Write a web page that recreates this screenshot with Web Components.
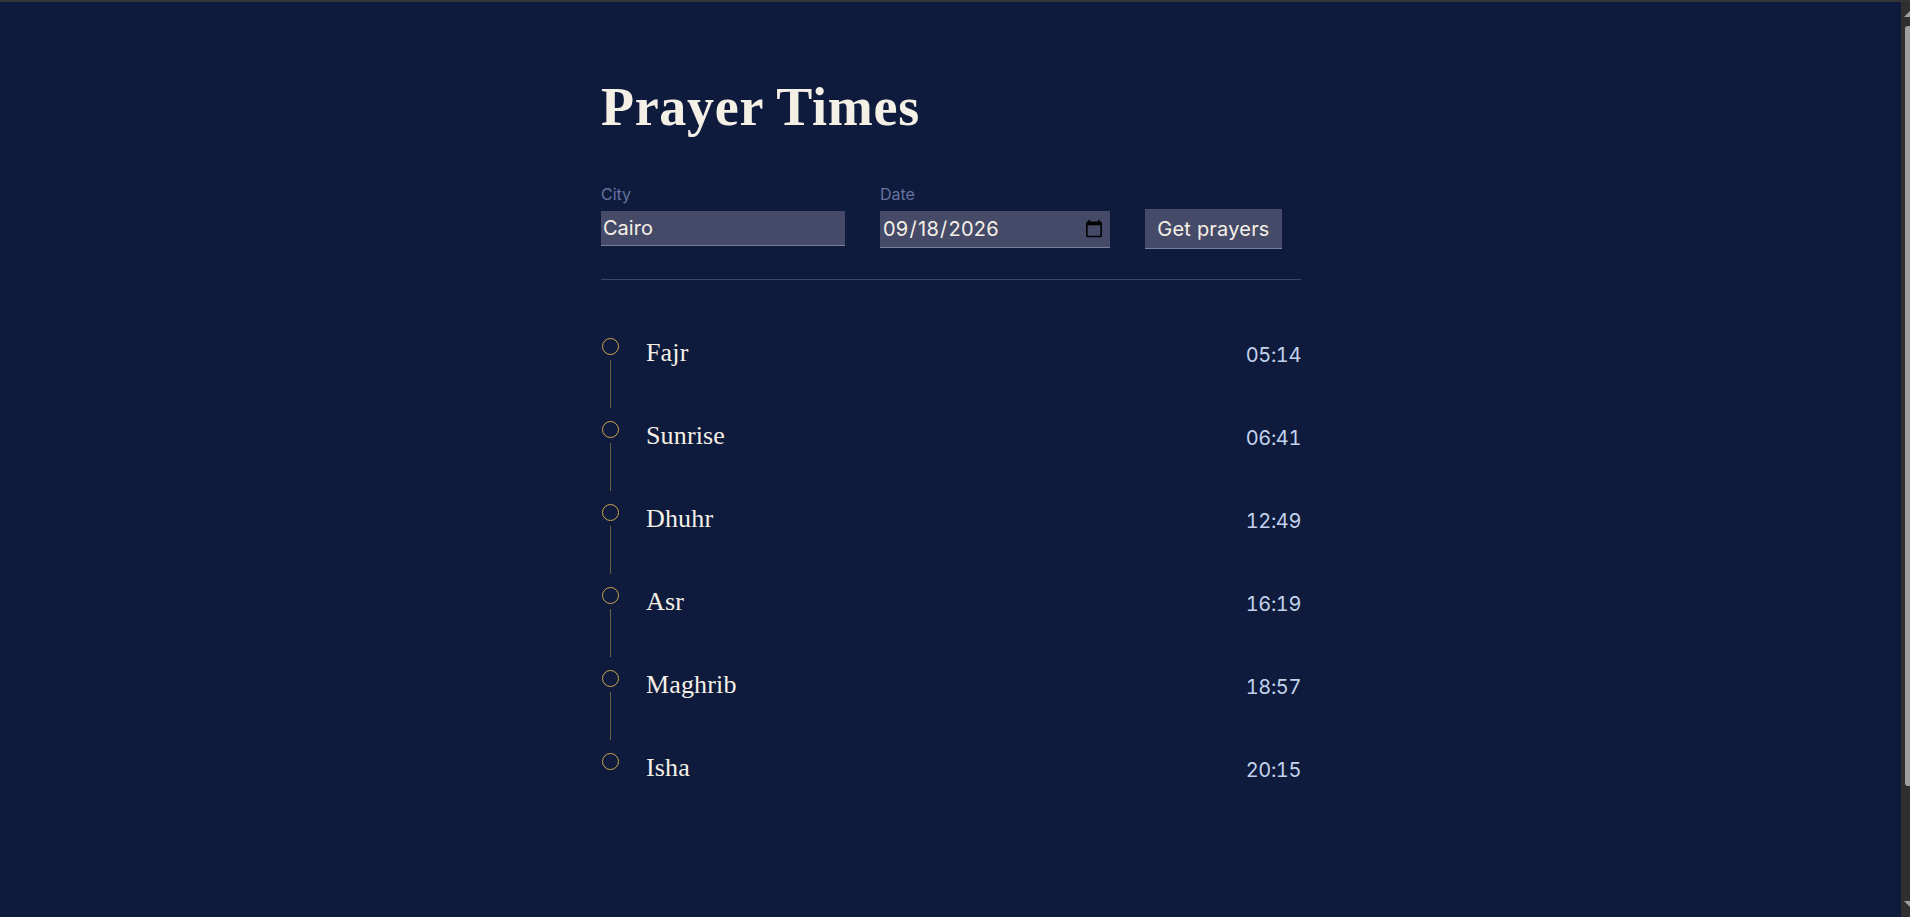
<!DOCTYPE html>
<html lang="en">
<head>
<meta charset="utf-8">
<title>Prayer Times</title>
<style>
  html, body { margin: 0; height: 100%; background: #0e1b3d; overflow: hidden; }
  body { font-family: "Inter", "Liberation Sans", sans-serif; }
</style>
</head>
<body>
<prayer-app>
  <prayer-form slot="form"></prayer-form>
  <prayer-row name="Fajr" time="05:14"></prayer-row>
  <prayer-row name="Sunrise" time="06:41"></prayer-row>
  <prayer-row name="Dhuhr" time="12:49"></prayer-row>
  <prayer-row name="Asr" time="16:19"></prayer-row>
  <prayer-row name="Maghrib" time="18:57"></prayer-row>
  <prayer-row name="Isha" time="20:15" last></prayer-row>
</prayer-app>
<fake-scrollbar></fake-scrollbar>

<script>
class PrayerApp extends HTMLElement {
  constructor() {
    super();
    this.shadow = this.attachShadow({ mode: "open" });
    this.shadow.innerHTML = `
      <style>
        :host {
          display: block;
          box-sizing: border-box;
          width: 1910px;
          height: 917px;
          border-top: 2px solid #353535;
          padding-right: 9px;
          color: #f5f0e6;
        }
        .wrap { width: 700px; margin: 0 auto; padding-left: 1px; }
        h1 {
          margin: 0;
          padding-top: 75px;
          height: 101px;
          font: 700 54px/60px "Liberation Serif", serif;
          letter-spacing: 0.7px;
          color: #f5f0e6;
        }
        .form { height: 101px; border-bottom: 1px solid #3d4662; }
        .list { padding-top: 58px; }
      </style>
      <div class="wrap">
        <h1>Prayer Times</h1>
        <div class="form"><slot name="form"></slot></div>
        <div class="list"><slot></slot></div>
      </div>`;
  }
}

class PrayerForm extends HTMLElement {
  constructor() {
    super();
    this.shadow = this.attachShadow({ mode: "open" });
    this.shadow.innerHTML = `
      <style>
        :host { display: flex; align-items: flex-start; }
        label {
          display: block;
          height: 33px;
          padding-top: 7px;
          box-sizing: border-box;
          font: 400 16px/18px "Inter", "Liberation Sans", sans-serif;
          color: #66739f;
        }
        input, button {
          display: block;
          box-sizing: border-box;
          margin: 0;
          background: #454a68;
          color: #f5f0e6;
          border: 0;
          border-bottom: 1px solid #7a7f9c;
          border-radius: 0;
          outline: 0;
          font: 400 20px "Inter", "Liberation Sans", sans-serif;
        }
        .city { width: 244px; margin-right: 35px; }
        .city input { width: 244px; height: 35px; padding: 0 2px; }
        .date { width: 230px; margin-right: 35px; }
        .date input { width: 230px; height: 37px; padding: 0 4px 0 2px; letter-spacing: 0.25px; }
        button { width: 137px; height: 40px; margin-top: 31px; padding: 0; letter-spacing: 0.2px; }
      </style>
      <div class="city">
        <label for="city">City</label>
        <input id="city" type="text" value="Cairo">
      </div>
      <div class="date">
        <label for="date">Date</label>
        <input id="date" type="date" value="2026-09-18">
      </div>
      <button type="button">Get prayers</button>`;
  }
}

class PrayerRow extends HTMLElement {
  constructor() {
    super();
    this.shadow = this.attachShadow({ mode: "open" });
  }

  connectedCallback() {
    var last = this.hasAttribute("last");
    this.shadow.innerHTML = `
      <style>
        :host { display: flex; align-items: flex-start; height: 83px; }
        .mark { width: 18px; margin-left: 1px; flex: none; }
        .dot {
          box-sizing: border-box;
          width: 17px;
          height: 17px;
          border: 1.5px solid #cfa64c;
          border-radius: 50%;
        }
        .line { width: 1px; height: 48px; margin: 5px 0 0 8px; background: #6a6043; }
        .name {
          flex: 1;
          margin-left: 26px;
          font: 400 26px/30px "Liberation Serif", serif;
          letter-spacing: 0.15px;
          color: #f5f0e6;
        }
        .time {
          padding-top: 5px;
          font: 400 20px/24px "Inter", "Liberation Sans", sans-serif;
          font-variant-numeric: tabular-nums;
          letter-spacing: -0.4px;
          color: #c3d3ec;
        }
      </style>
      <div class="mark">
        <div class="dot"></div>
        ${last ? "" : '<div class="line"></div>'}
      </div>
      <div class="name">${this.getAttribute("name")}</div>
      <div class="time">${this.getAttribute("time")}</div>`;
  }
}

class FakeScrollbar extends HTMLElement {
  constructor() {
    super();
    this.shadow = this.attachShadow({ mode: "open" });
    this.shadow.innerHTML = `
      <style>
        :host {
          display: block;
          position: fixed;
          top: 2px;
          right: 0;
          width: 9px;
          height: 915px;
          background: #2f2f2f;
        }
        .thumb {
          position: absolute;
          left: 4px;
          top: 24px;
          width: 5px;
          height: 760px;
          background: #9f9f9f;
          border-radius: 3px 0 0 3px;
        }
        svg { position: absolute; left: 0; width: 9px; height: 8px; }
      </style>
      <svg style="top:8px" viewBox="0 0 9 8"><path d="M3 7 9 1V7Z" fill="#9f9f9f"/></svg>
      <div class="thumb"></div>
      <svg style="top:898px" viewBox="0 0 9 8"><path d="M3 1 9 7V1Z" fill="#9f9f9f"/></svg>`;
  }
}

customElements.define("prayer-app", PrayerApp);
customElements.define("prayer-form", PrayerForm);
customElements.define("prayer-row", PrayerRow);
customElements.define("fake-scrollbar", FakeScrollbar);
</script>
</body>
</html>
